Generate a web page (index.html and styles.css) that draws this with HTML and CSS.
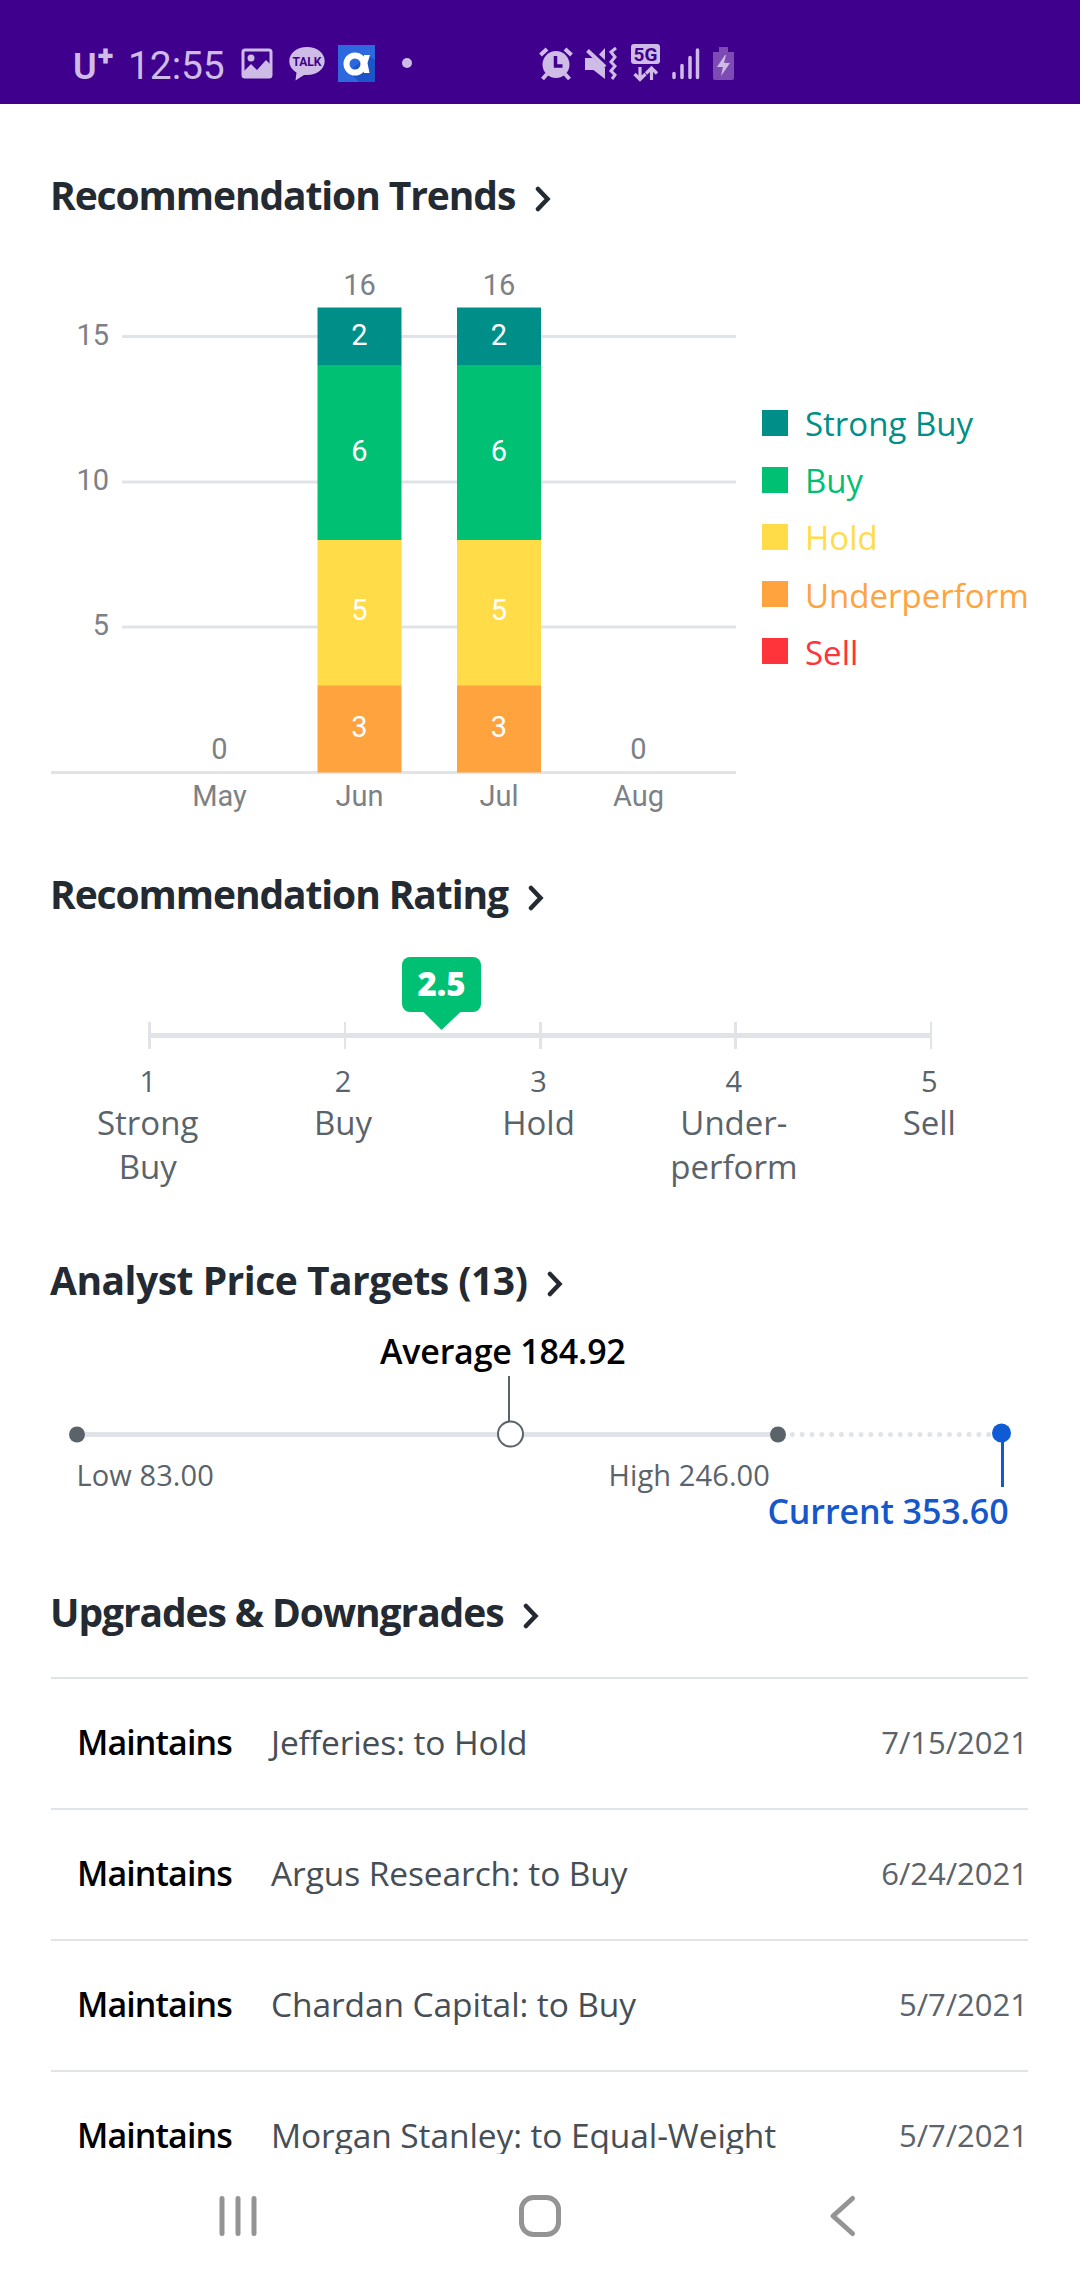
FILE: index.html
```html
<!DOCTYPE html>
<html lang="en">
<head>
    <meta charset="UTF-8">
    <meta name="viewport" content="width=device-width, initial-scale=1.0">
    <title>Recommendation Trends</title>
    <link rel="stylesheet" href="styles.css">
</head>
<body>
    <div class="screen">
        <header class="status-bar">
            <div class="carrier">U<span class="plus">+</span></div>
            <div class="clock">12:55</div>
            <svg class="icon-photo" width="32" height="40" viewBox="0 0 32 40">
                <rect x="2" y="6" width="28" height="27" rx="2" fill="none" stroke="#cfbce6" stroke-width="3"/>
                <circle cx="10" cy="14" r="3.5" fill="#cfbce6"/>
                <path d="M3 27l7-7 6 6 9-10 5 5v12H3z" fill="#cfbce6"/>
            </svg>
            <svg class="icon-talk" width="36" height="40" viewBox="0 0 36 40">
                <path d="M18 3C8 3 .3 9 .3 17c0 5 3 9 7.2 11.500L6.500 36.500l8.500-5.600c1 .1 2 .1 3 .1 10 0 17.700-6 17.700-14S28 3 18 3z" fill="#cfbce6"/>
                <text x="18" y="21.500" class="talk-text">TALK</text>
            </svg>
            <svg class="icon-app" width="37" height="40" viewBox="0 0 37 40">
                <rect y="1" width="37" height="37" fill="#2d68df"/>
                <path d="M11 28l10 10h16V16l-7-5z" fill="#1c55c9"/>
                <circle cx="17" cy="20" r="8.500" fill="none" stroke="#fff" stroke-width="6"/>
                <path d="M26 11h6l-2.500 8 2 10h-5.500l-2-6z" fill="#fff"/>
            </svg>
            <span class="more-dot"></span>
            <svg class="icon-alarm" width="34" height="40" viewBox="0 0 34 40">
                <g stroke="#cfbce6" stroke-width="4">
                    <path d="M1.500 11L8 5M26 5l6.500 6M8 30l-4.500 5M26 30l4.500 5"/>
                </g>
                <circle cx="17" cy="20.500" r="13.500" fill="#cfbce6"/>
                <path d="M16.500 12v10h7" fill="none" stroke="#3f008d" stroke-width="3.500"/>
            </svg>
            <svg class="icon-mute" width="33" height="40" viewBox="0 0 33 40">
                <path d="M0 14h7.500L20 24v11L8.500 26H0zM20 4v12l-6-5.500z" fill="#cfbce6"/>
                <path d="M2.500 6.500L20 23" stroke="#cfbce6" stroke-width="4"/>
                <path d="M31 4l-5 4 4 5-4 5 4 4-4 5 4 4-3 4" fill="none" stroke="#cfbce6" stroke-width="3"/>
            </svg>
            <svg class="icon-5g" width="30" height="40" viewBox="0 0 30 40">
                <rect y="0" width="29" height="20" rx="3" fill="#cfbce6"/>
                <text x="14.500" y="17" class="net-text">5G</text>
                <path d="M9 23v12M3.500 30L9 35.500l5.500-5.500M20.500 36V24M15 29.500l5.500-5.500 5.500 5.500" fill="none" stroke="#cfbce6" stroke-width="3.200"/>
            </svg>
            <svg class="icon-signal" width="28" height="40" viewBox="0 0 28 40">
                <path d="M2 29.500v4M10 21.500v12M18 13.500v20M25.500 6v27.500" stroke="#cfbce6" stroke-width="3.500" stroke-linecap="round"/>
            </svg>
            <svg class="icon-battery" width="22" height="40" viewBox="0 0 22 40">
                <path d="M6 3h9v5h6v26q0 2-2 2H2q-2 0-2-2V8h6z" fill="#7d4bb3"/>
                <path d="M12 11L4 23h6l-2 9 9-13h-6l2-8z" fill="#cfbce6"/>
            </svg>
        </header>

        <main class="content">
            <section class="trends">
                <h2>Recommendation Trends
                    <svg class="chevron" width="16" height="26" viewBox="0 0 16 26"><path d="M3 3l9.500 10L3 23"/></svg>
                </h2>
                <div class="trends-body">
                    <svg class="chart" width="686" height="600" viewBox="0 0 686 600">
                        <g class="grid-lines">
                            <path d="M71 116.500H685M71 262H685M71 407H685M0 552.500H685"/>
                        </g>
                        <g class="bar">
                            <rect x="266.500" y="87.500" width="84" height="58" fill="#008f88"/>
                            <rect x="266.500" y="145" width="84" height="175" fill="#00c073"/>
                            <rect x="266.500" y="320" width="84" height="146" fill="#ffdc48"/>
                            <rect x="266.500" y="465.500" width="84" height="87" fill="#ffa33e"/>
                        </g>
                        <g class="bar">
                            <rect x="406" y="87.500" width="84" height="58" fill="#008f88"/>
                            <rect x="406" y="145" width="84" height="175" fill="#00c073"/>
                            <rect x="406" y="320" width="84" height="146" fill="#ffdc48"/>
                            <rect x="406" y="465.500" width="84" height="87" fill="#ffa33e"/>
                        </g>
                        <g class="bar-values">
                            <text x="308.500" y="125">2</text>
                            <text x="308.500" y="241">6</text>
                            <text x="308.500" y="400">5</text>
                            <text x="308.500" y="516.500">3</text>
                            <text x="448" y="125">2</text>
                            <text x="448" y="241">6</text>
                            <text x="448" y="400">5</text>
                            <text x="448" y="516.500">3</text>
                        </g>
                        <g class="totals">
                            <text x="168.500" y="538.500">0</text>
                            <text x="308.500" y="75">16</text>
                            <text x="448" y="75">16</text>
                            <text x="587.500" y="538.500">0</text>
                        </g>
                        <g class="months">
                            <text x="168.500" y="586">May</text>
                            <text x="308.500" y="586">Jun</text>
                            <text x="448" y="586">Jul</text>
                            <text x="587.500" y="586">Aug</text>
                        </g>
                        <g class="y-labels">
                            <text x="58" y="125">15</text>
                            <text x="58" y="270">10</text>
                            <text x="58" y="415">5</text>
                        </g>
                    </svg>
                    <ul class="legend">
                        <li class="strong-buy"><span>Strong Buy</span></li>
                        <li class="buy"><span>Buy</span></li>
                        <li class="hold"><span>Hold</span></li>
                        <li class="underperform"><span>Underperform</span></li>
                        <li class="sell"><span>Sell</span></li>
                    </ul>
                </div>
            </section>

            <section class="rating">
                <h2>Recommendation Rating
                    <svg class="chevron" width="16" height="26" viewBox="0 0 16 26"><path d="M3 3l9.500 10L3 23"/></svg>
                </h2>
                <svg class="rating-axis" width="977" height="142" viewBox="0 0 977 142">
                    <g fill="#e0e4e9">
                        <rect x="97" y="114" width="784" height="5"/>
                        <rect x="97" y="103" width="3" height="27"/>
                        <rect x="293" y="103" width="2" height="27"/>
                        <rect x="488" y="103" width="3" height="27"/>
                        <rect x="683" y="103" width="3" height="27"/>
                        <rect x="879" y="103" width="2" height="27"/>
                    </g>
                    <rect x="351" y="38" width="79" height="55" rx="8" fill="#00c073"/>
                    <path d="M372 92.500h38L390.500 111z" fill="#00c073"/>
                    <text x="390.500" y="77" class="rating-value">2.5</text>
                </svg>
                <div class="scale">
                    <div><span>1</span>Strong<br>Buy</div>
                    <div><span>2</span>Buy</div>
                    <div><span>3</span>Hold</div>
                    <div><span>4</span>Under-<br>perform</div>
                    <div><span>5</span>Sell</div>
                </div>
            </section>

            <section class="targets">
                <h2>Analyst Price Targets (13)
                    <svg class="chevron" width="16" height="26" viewBox="0 0 16 26"><path d="M3 3l9.500 10L3 23"/></svg>
                </h2>
                <svg class="price-range" width="977" height="240" viewBox="0 0 977 240">
                    <path d="M26 129.500H727" stroke="#e0e4e9" stroke-width="5"/>
                    <path d="M741.300 129.500H940" stroke="#e0e4e9" stroke-width="5" stroke-linecap="round" stroke-dasharray="0 9.820"/>
                    <circle cx="26" cy="129.500" r="8" fill="#5b636a"/>
                    <circle cx="727" cy="129.500" r="8" fill="#5b636a"/>
                    <path d="M458 71v46" stroke="#5b636a" stroke-width="2"/>
                    <circle cx="459.500" cy="129" r="12.500" fill="#fff" stroke="#5b636a" stroke-width="2"/>
                    <path d="M951.500 129v53" stroke="#1557cc" stroke-width="3"/>
                    <circle cx="950.500" cy="128" r="9.500" fill="#0f5bd6"/>
                    <text x="329" y="59" class="average">Average 184.92</text>
                    <text x="25.500" y="181" class="bound">Low 83.00</text>
                    <text x="719" y="181" class="bound end">High 246.00</text>
                    <text x="957.500" y="218.500" class="current">Current 353.60</text>
                </svg>
            </section>

            <section class="upgrades">
                <h2>Upgrades &amp; Downgrades
                    <svg class="chevron" width="16" height="26" viewBox="0 0 16 26"><path d="M3 3l9.500 10L3 23"/></svg>
                </h2>
                <ul class="upgrade-list">
                    <li><b>Maintains</b><span>Jefferies: to Hold</span><time>7/15/2021</time></li>
                    <li><b>Maintains</b><span>Argus Research: to Buy</span><time>6/24/2021</time></li>
                    <li><b>Maintains</b><span>Chardan Capital: to Buy</span><time>5/7/2021</time></li>
                    <li><b>Maintains</b><span>Morgan Stanley: to Equal-Weight</span><time>5/7/2021</time></li>
                </ul>
            </section>
        </main>

        <nav class="nav-bar">
            <svg width="44" height="44" viewBox="0 0 44 44"><path d="M6 4.500v35M22 4.500v35M38 4.500v35"/></svg>
            <svg width="44" height="44" viewBox="0 0 44 44"><rect x="3.500" y="3.500" width="37" height="37" rx="12"/></svg>
            <svg width="44" height="44" viewBox="0 0 44 44"><path d="M32.500 4.500L13 22l19.500 17.500"/></svg>
        </nav>
    </div>
</body>
</html>
```
FILE: styles.css
```css
* {
    box-sizing: border-box;
}

body {
    margin: 0;
    background: #fff;
    font-family: "Open Sans", "Noto Sans", sans-serif;
    color: #232a31;
}

ul {
    list-style: none;
    margin: 0;
    padding: 0;
}

svg {
    display: block;
    flex: none;
}

.screen {
    display: flex;
    flex-direction: column;
    width: 1080px;
    height: 2280px;
    overflow: hidden;
}

/* status bar */
.status-bar {
    display: flex;
    align-items: flex-start;
    flex: none;
    height: 104px;
    padding: 44px 0 0 73px;
    background: #3f008d;
    color: #cfbce6;
    font-family: Roboto, sans-serif;
}

.carrier {
    display: flex;
    width: 55px;
    font: 600 36px/47px Roboto, sans-serif;
}

.plus {
    font-size: 29px;
    font-weight: 900;
    line-height: 25px;
    margin-left: 1px;
}

.clock {
    width: 113px;
    font-size: 39px;
    line-height: 44px;
    letter-spacing: -0.1px;
}

.icon-talk {
    margin-left: 16px;
}

.talk-text {
    font: 700 12px Roboto, sans-serif;
    fill: #3f008d;
    text-anchor: middle;
}

.icon-app {
    margin-left: 13px;
}

.more-dot {
    width: 10px;
    height: 10px;
    margin: 14px 127px 0 27px;
    border-radius: 50%;
    background: #cfbce6;
}

.icon-mute {
    margin-left: 12px;
}

.icon-5g {
    margin-left: 13px;
}

.net-text {
    font: 700 19px Roboto, sans-serif;
    fill: #3f008d;
    text-anchor: middle;
}

.icon-signal {
    margin-left: 11px;
}

.icon-battery {
    margin-left: 13px;
}

/* page content */
.content {
    flex: 1;
    min-height: 0;
    overflow: hidden;
    padding: 66px 52px 0 51px;
}

h2 {
    display: flex;
    align-items: center;
    gap: 20px;
    height: 50px;
    margin: 0 0 0 -1px;
    font-size: 39px;
    line-height: 50px;
    font-weight: 700;
    letter-spacing: -1.1px;
    white-space: nowrap;
}

.targets h2 {
    letter-spacing: -0.5px;
}

.chevron {
    margin-top: 8px;
}

.chevron path {
    fill: none;
    stroke: #232a31;
    stroke-width: 4.5;
    stroke-linecap: round;
}

/* recommendation trends */
.trends {
    height: 699px;
}

.trends-body {
    display: flex;
}

.chart text {
    font-family: Roboto, sans-serif;
    font-size: 29px;
    fill: #7d8186;
    text-anchor: middle;
}

.chart .bar-values text {
    fill: #fff;
}

.chart .y-labels text {
    text-anchor: end;
}

.grid-lines path {
    stroke: #e0e4e9;
    stroke-width: 3;
}

.legend {
    padding: 174px 0 0 25px;
}

.legend li {
    display: flex;
    align-items: center;
    gap: 17px;
    height: 57.200px;
    font-size: 33px;
    white-space: nowrap;
}

.legend span {
    padding-top: 2px;
}

.legend li::before {
    content: "";
    width: 26px;
    height: 26px;
    background: currentColor;
}

.strong-buy {
    color: #008f88;
}

.buy {
    color: #00c073;
}

.hold {
    color: #ffdc48;
}

.underperform {
    color: #ffa33e;
}

.sell {
    color: #ff333a;
}

/* recommendation rating */
.rating {
    height: 386px;
}

.rating-value {
    font-size: 33px;
    font-weight: 800;
    fill: #fff;
    text-anchor: middle;
}

.scale {
    display: grid;
    grid-template-columns: repeat(5, 1fr);
    margin: 0 1px 0 -1px;
    text-align: center;
    font-size: 33px;
    line-height: 44px;
    color: #5b636a;
}

.scale span {
    display: block;
    margin-bottom: 1px;
    font-size: 29px;
    line-height: 39px;
}

/* analyst price targets */
.targets {
    height: 332px;
}

.average,
.current {
    font-size: 34px;
    font-weight: 600;
}

.average {
    fill: #000;
    letter-spacing: -0.2px;
}

.current {
    fill: #1557cc;
    letter-spacing: -0.1px;
    text-anchor: end;
}

.bound {
    font-size: 29px;
    letter-spacing: 0.1px;
    fill: #5b636a;
}

.end {
    text-anchor: end;
}

/* upgrades & downgrades */
.upgrade-list {
    margin-top: 40px;
}

.upgrade-list li {
    display: flex;
    align-items: center;
    height: 131px;
    padding: 0 0 4px 26px;
    border-top: 2px solid #e0e4e9;
    white-space: nowrap;
}

.upgrade-list b {
    width: 194px;
    font-size: 34px;
    font-weight: 600;
    letter-spacing: -0.9px;
    color: #000;
}

.upgrade-list span {
    flex: 1;
    font-size: 33.500px;
    letter-spacing: -0.1px;
    color: #464e56;
}

.upgrade-list time {
    font-size: 31px;
    color: #5b636a;
}

/* system navigation */
.nav-bar {
    display: flex;
    justify-content: space-between;
    flex: none;
    height: 126px;
    padding: 40px 216px 0;
    background: #fff;
}

.nav-bar svg {
    fill: none;
    stroke: #949494;
    stroke-width: 5;
    stroke-linecap: round;
    stroke-linejoin: round;
}
```
